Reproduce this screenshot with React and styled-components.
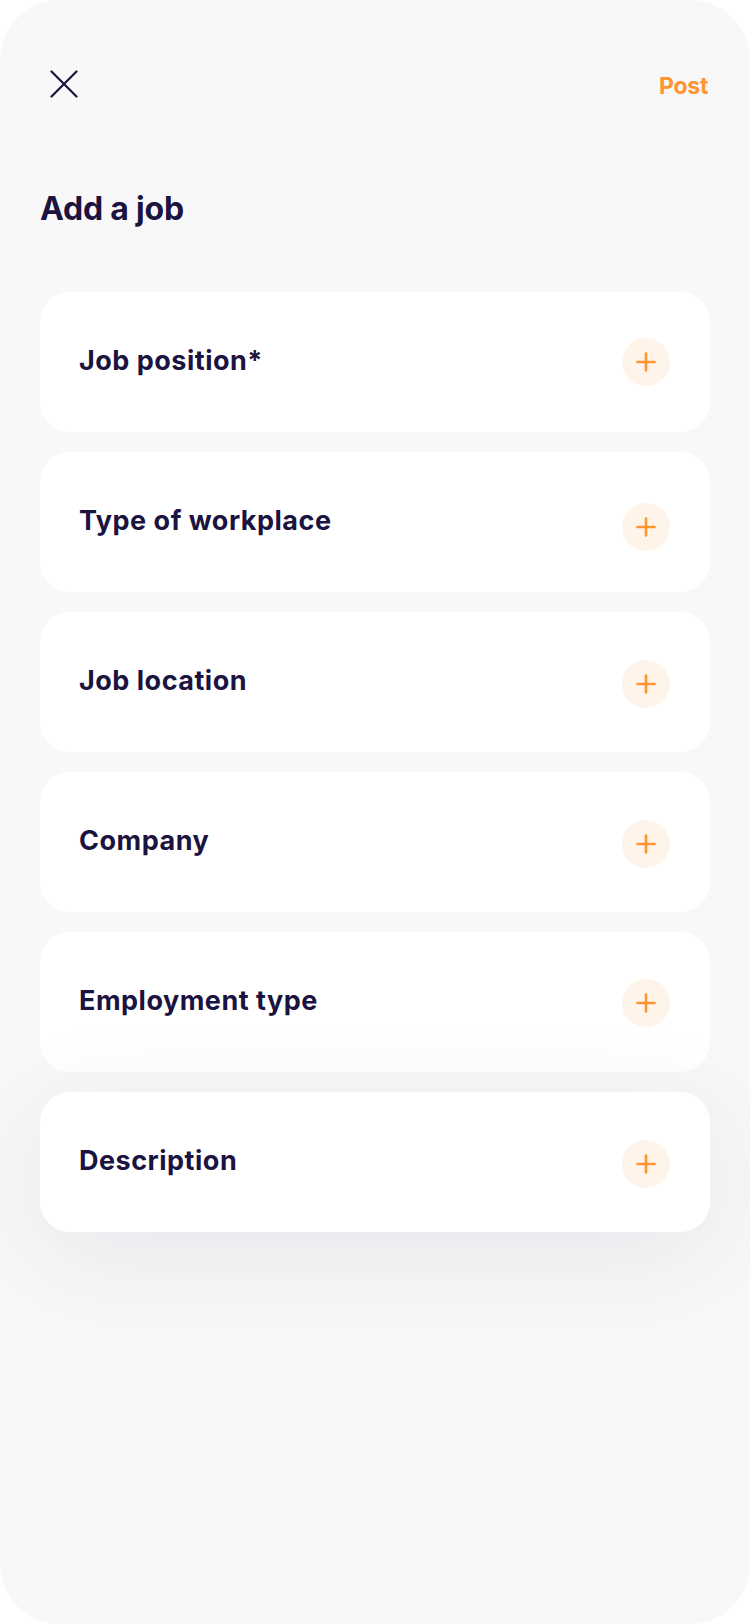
import React from 'react'
import styled, { createGlobalStyle } from 'styled-components';

const GlobalStyle = createGlobalStyle`
  html, body {
    margin: 0;
    padding: 0;
    background: #ffffff;
  }
  body {
    font-family: Inter, "Liberation Sans", sans-serif;
    -webkit-font-smoothing: antialiased;
  }
`;

const fields = [
  { label: 'Job position*' },
  { label: 'Type of workplace', drop: 5 },
  { label: 'Job location', drop: 2 },
  { label: 'Company', drop: 2 },
  { label: 'Employment type', drop: 1 },
  { label: 'Description', drop: 2, raised: true },
];

const CloseIcon = () => (
  <svg width="28" height="28" viewBox="0 0 28 28" fill="none">
    <path d="M1.5 1.5L26.5 26.5M26.5 1.5L1.5 26.5" stroke="#1b1340" strokeWidth="2.2" strokeLinecap="round" />
  </svg>
);

const PlusIcon = () => (
  <svg width="20" height="20" viewBox="0 0 20 20" fill="none">
    <path d="M10 1.5V18.5M1.5 10H18.5" stroke="#ff9431" strokeWidth="2.6" strokeLinecap="round" />
  </svg>
);

const App = () => {
  return (
    <Screen>
      <GlobalStyle />
      <Header>
        <CloseButton aria-label="Close">
          <CloseIcon />
        </CloseButton>
        <PostButton>Post</PostButton>
      </Header>
      <Title>Add a job</Title>
      <FieldList>
        {fields.map((f) => (
          <FieldCard key={f.label} $raised={f.raised}>
            <FieldLabel>{f.label}</FieldLabel>
            <AddButton $drop={f.drop || 0} aria-label={`Add ${f.label}`}>
              <PlusIcon />
            </AddButton>
          </FieldCard>
        ))}
      </FieldList>
    </Screen>
  )
}

export default App


const Screen = styled.div`
  width: 750px;
  height: 1624px;
  box-sizing: border-box;
  background: #f8f8f8;
  border-radius: 60px;
  overflow: hidden;
  padding: 0 40px;
`;

const Header = styled.div`
  display: flex;
  align-items: flex-start;
  justify-content: space-between;
  padding: 70px 2px 0 10px;
  height: 28px;
`;

const CloseButton = styled.button`
  border: 0;
  padding: 0;
  margin: 0;
  background: none;
  display: flex;
  width: 28px;
  height: 28px;
`;

const PostButton = styled.button`
  border: 0;
  padding: 0;
  margin-top: 4px;
  background: none;
  font-family: Inter, "Liberation Sans", sans-serif;
  font-weight: 700;
  font-size: 23px;
  line-height: 24px;
  letter-spacing: -0.3px;
  color: #ff9431;
`;

const Title = styled.h1`
  margin: 95px 0 0 0;
  font-size: 32px;
  line-height: 32px;
  font-weight: 700;
  letter-spacing: -0.2px;
  color: #1b1340;
`;

const FieldList = styled.div`
  display: flex;
  flex-direction: column;
  gap: 20px;
  margin-top: 67px;
`;

const FieldCard = styled.div`
  height: 140px;
  box-sizing: border-box;
  background: #ffffff;
  border-radius: 30px;
  display: flex;
  align-items: center;
  justify-content: space-between;
  padding: 0 40px 0 39px;
  box-shadow: ${({ $raised }) => ($raised ? '0 22px 110px rgba(40, 50, 110, 0.085)' : 'none')};
`;

const FieldLabel = styled.span`
  font-size: 27px;
  line-height: 30px;
  font-weight: 700;
  letter-spacing: 0.5px;
  color: #1b1340;
  margin-top: -3px;
`;

const AddButton = styled.button`
  width: 48px;
  height: 48px;
  border-radius: 50%;
  border: 0;
  padding: 0;
  background: #fff4ea;
  display: flex;
  align-items: center;
  justify-content: center;
  margin-top: ${({ $drop }) => $drop * 2}px;
`;
